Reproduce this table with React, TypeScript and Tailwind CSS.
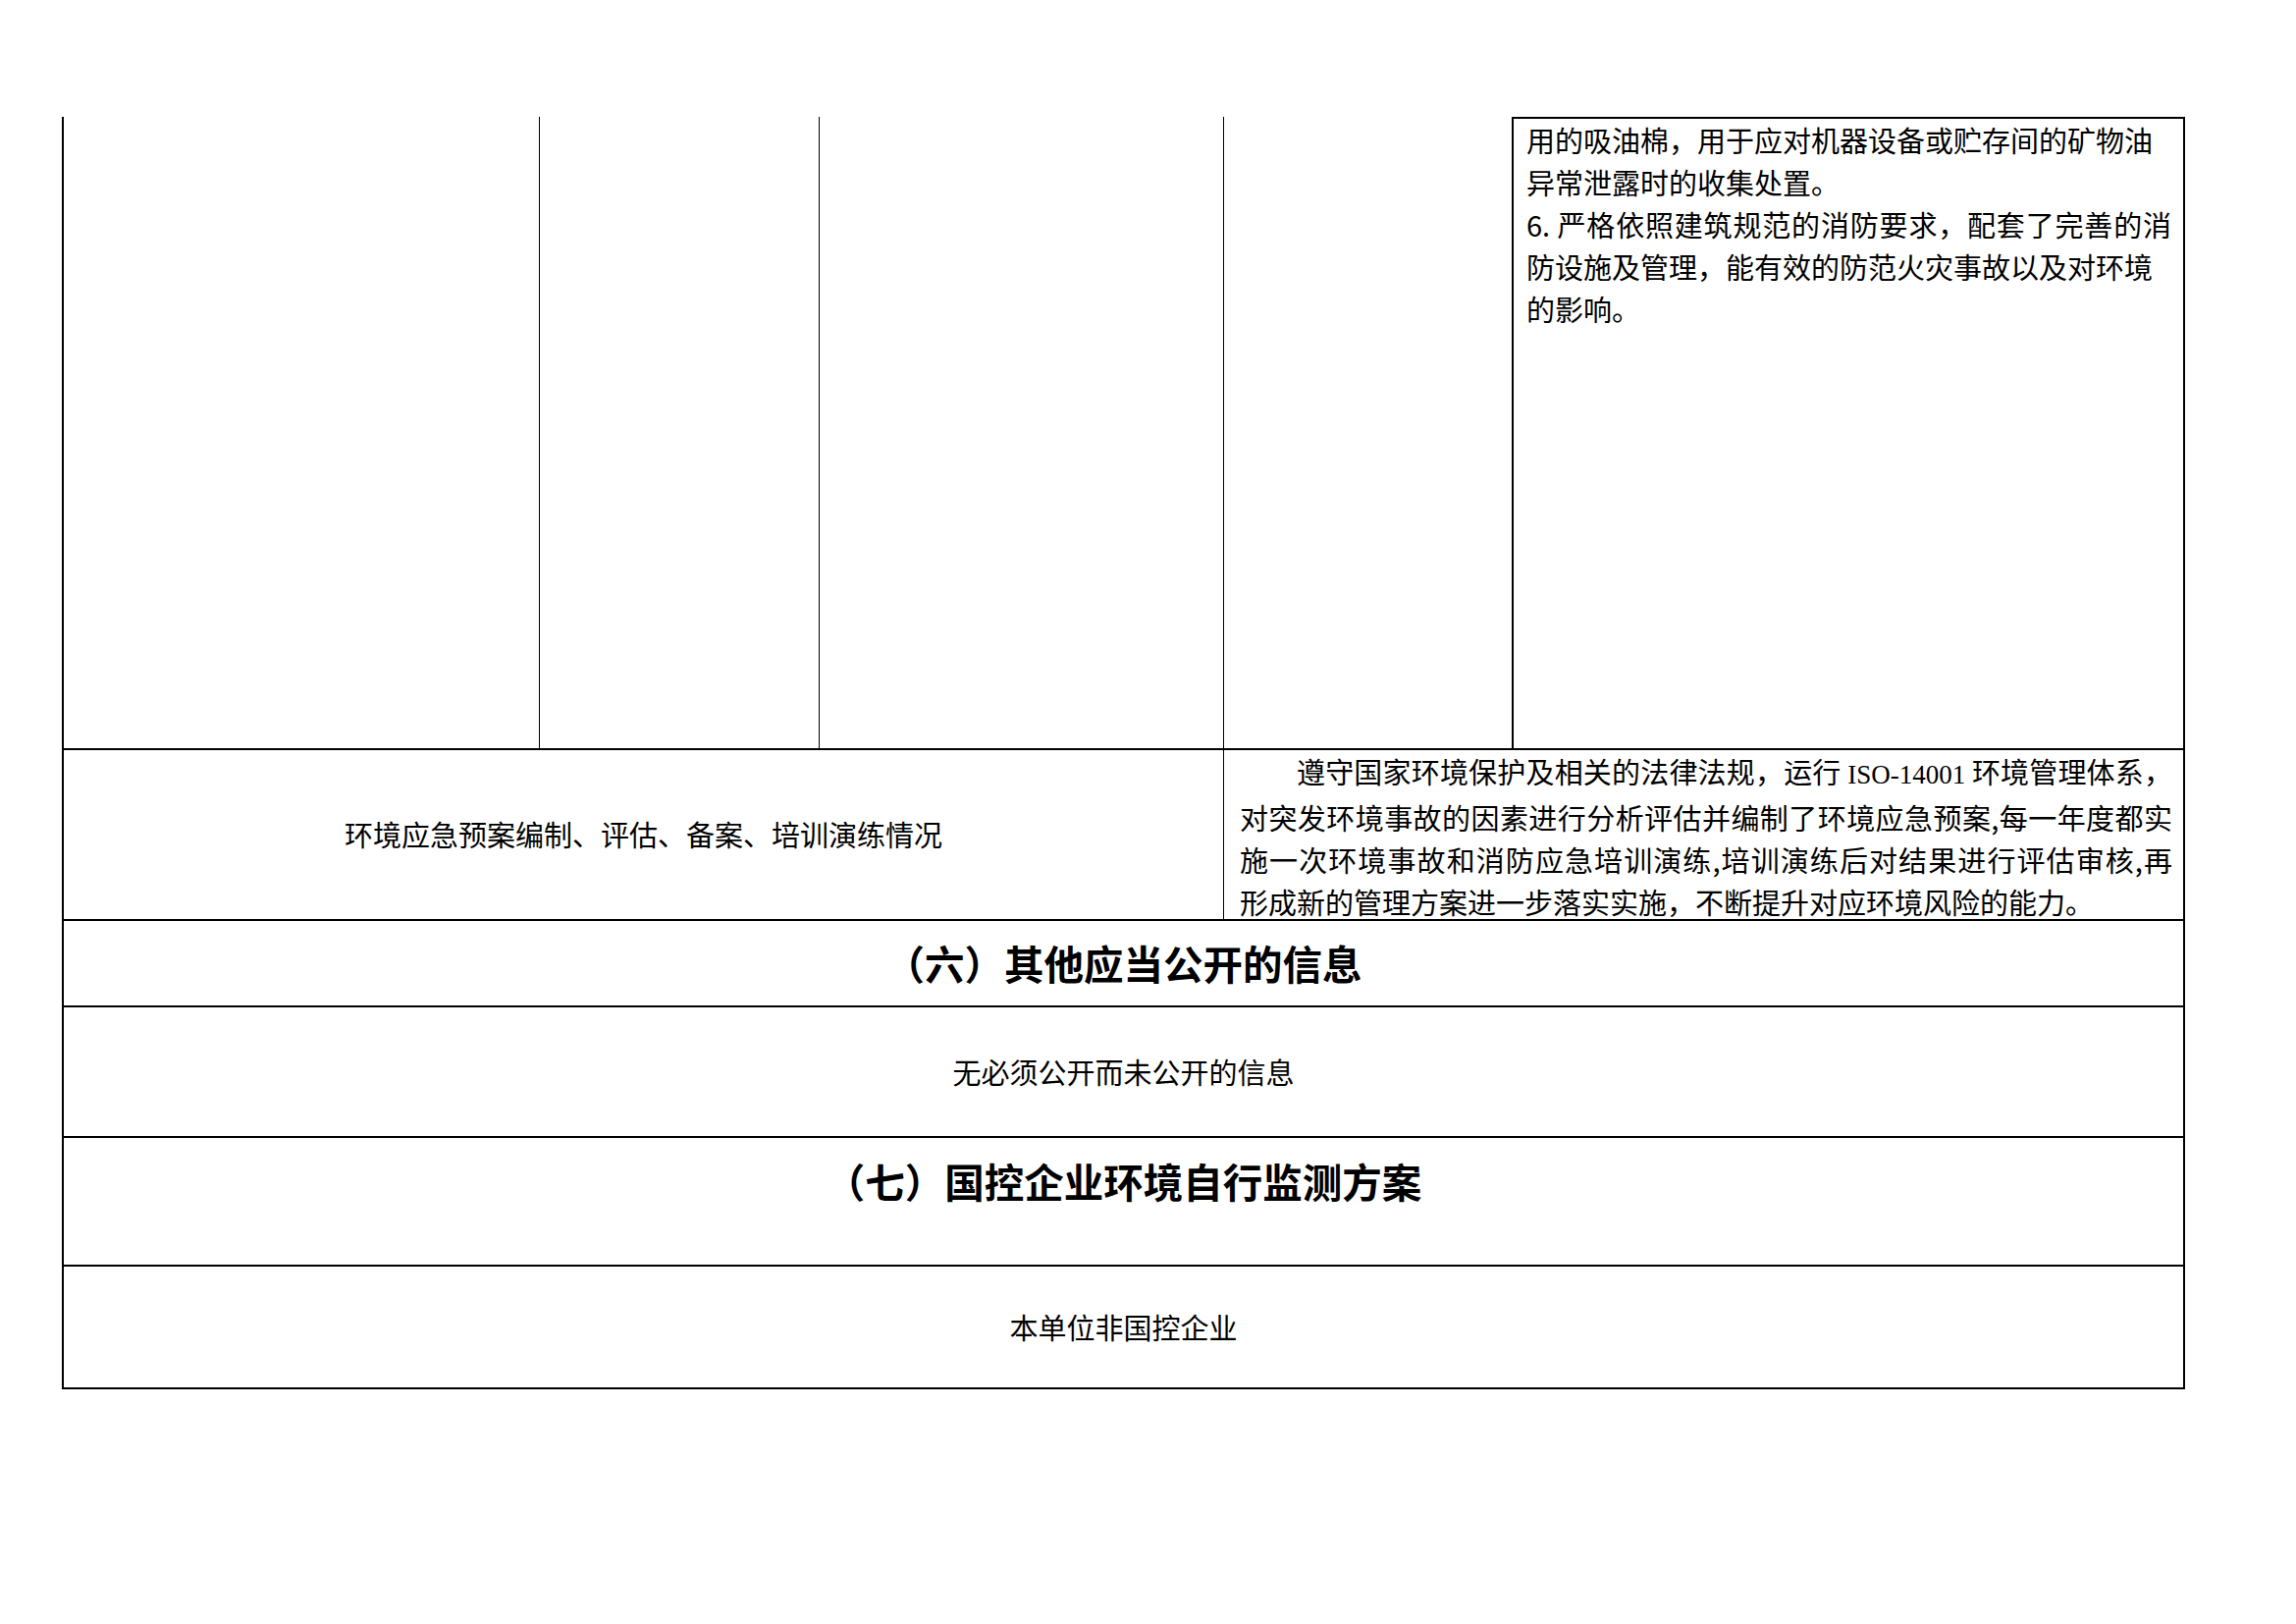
import React from "react";

const font = { fontFamily: '"Noto Sans CJK SC", "Noto Sans", sans-serif' };

// continuation of the table from the previous page
const TopSection = () => (
  <div className="flex h-[643px]">
    <div className="w-[485px] shrink-0 border-r border-black" />
    <div className="w-[285px] shrink-0 border-r border-black" />
    <div className="w-[412px] shrink-0 border-r border-black" />
    <div className="w-[293px] shrink-0" />
    <div className="flex-1 min-w-0 border-l-2 border-t-2 border-black pl-[13px] pr-[12px] text-[29px] leading-[43px]">
      <div className="whitespace-nowrap">用的吸油棉，用于应对机器设备或贮存间的矿物油</div>
      <div className="whitespace-nowrap">异常泄露时的收集处置。</div>
      <div className="whitespace-nowrap [text-align-last:justify] text-justify">6. 严格依照建筑规范的消防要求，配套了完善的消</div>
      <div className="whitespace-nowrap">防设施及管理，能有效的防范火灾事故以及对环境</div>
      <div className="whitespace-nowrap">的影响。</div>
    </div>
  </div>
);

const EmergencyRow = () => (
  <div className="flex h-[174px] border-t-2 border-black">
    <div className="w-[1182px] shrink-0 border-r border-black flex items-center justify-center text-[29px]">
      环境应急预案编制、评估、备案、培训演练情况
    </div>
    <div className="flex-1 min-w-0 pl-[16px] pr-[11px] text-[29px] leading-[43px]">
      <div className="pl-[58px] whitespace-nowrap [text-align-last:justify]">
        遵守国家环境保护及相关的法律法规，运行{" "}
        <span className="text-[27px]" style={{ fontFamily: '"Liberation Serif", serif' }}>ISO-14001</span> 环境管理体系，
      </div>
      <div className="whitespace-nowrap [text-align-last:justify]">
        对突发环境事故的因素进行分析评估并编制了环境应急预案,每一年度都实
      </div>
      <div className="whitespace-nowrap [text-align-last:justify]">
        施一次环境事故和消防应急培训演练,培训演练后对结果进行评估审核,再
      </div>
      <div className="whitespace-nowrap">形成新的管理方案进一步落实实施，不断提升对应环境风险的能力。</div>
    </div>
  </div>
);

export default function App() {
  return (
    <div className="w-[2339px] h-[1654px] bg-white text-black" style={font}>
      <div className="pt-[119px] pl-[63px]">
        <div className="w-[2163px] border-l-2 border-r-2 border-b-2 border-black">
          <TopSection />
          <EmergencyRow />

          {/* 六 */}
          <div className="h-[88px] border-t-2 border-black flex items-center justify-center text-[40.5px] font-bold">
            （六）其他应当公开的信息
          </div>
          <div className="h-[133px] border-t-2 border-black flex items-center justify-center text-[29px]">
            无必须公开而未公开的信息
          </div>

          {/* 七 */}
          <div className="h-[131px] border-t-2 border-black pt-[16px] text-center text-[40.5px] leading-[56px] font-bold">
            （七）国控企业环境自行监测方案
          </div>
          <div className="h-[125px] border-t-2 border-black flex items-center justify-center text-[29px]">
            本单位非国控企业
          </div>
        </div>
      </div>
    </div>
  );
}
